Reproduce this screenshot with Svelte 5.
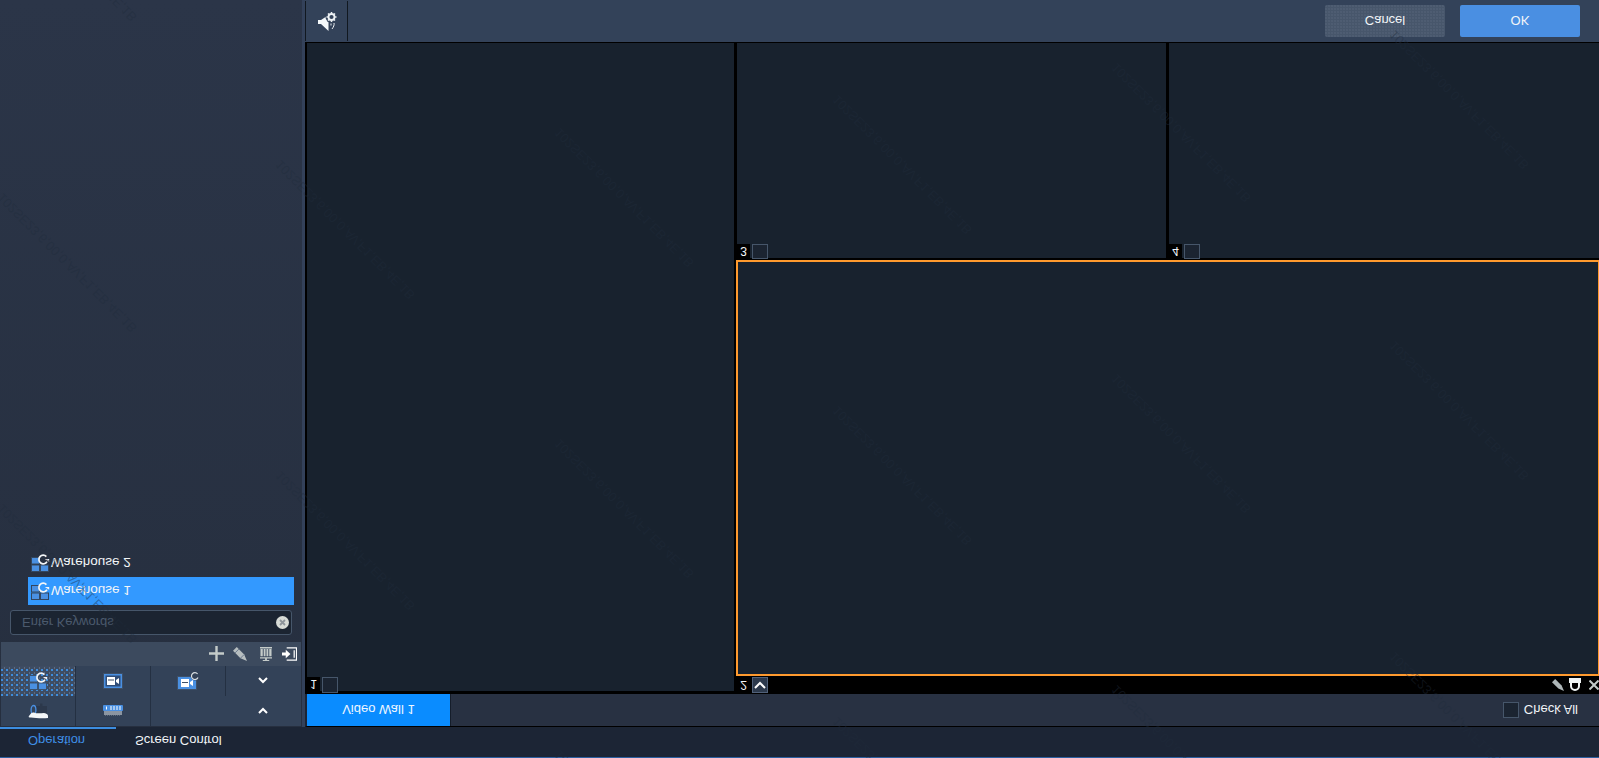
<script>
  const marks = [];
  for (let j = -1; j <= 2; j++) {
    for (let i = 0; i <= 5; i++) {
      const x = 278.4 * i;
      const y = 195 - 32.6 * i + 311 * j;
      if (y + 137 > 0 && y < 758) marks.push({ x, bottom: y - 7 });
    }
  }
  const wmText = '102SE23,6,00,0,AV,F1,EB,4E,1B';
</script>

{#snippet warehouse(frame)}
  <svg class="up" width="20" height="18" viewBox="0 0 20 18">
    <rect x="1.5" y="3.5" width="8" height="6.5" fill="#4a90e2" stroke={frame} />
    <rect x="1.5" y="11" width="8" height="6.5" fill="#4a90e2" stroke={frame} />
    <rect x="10.5" y="11" width="8" height="6.5" fill="#4a90e2" stroke={frame} />
    <path d="M16.4 2.6 A4.3 4.3 0 1 0 17 7.6" fill="none" stroke="#f4f6f8" stroke-width="1.7" />
    <path d="M14.8 5 H19.2 V7.8 Z" fill="#f4f6f8" />
  </svg>
{/snippet}

{#snippet cameraScreen()}
  <svg class="up" width="20" height="16" viewBox="0 0 20 16">
    <rect x="0" y="0" width="20" height="16" fill="#3e5068" />
    <rect x="1" y="1" width="18" height="14" fill="#4a90e2" />
    <rect x="2.5" y="2.5" width="15" height="11" fill="#2f4d78" />
    <rect x="4" y="4" width="8" height="8" fill="#fff" />
    <rect x="5" y="6.5" width="6" height="1" fill="#3e5068" />
    <path d="M13 7 L16 5 V11 L13 9 Z" fill="#fff" />
  </svg>
{/snippet}

<div class="app">
  <div class="main">
    <aside class="sidebar">
      <div class="side-fill"></div>
      <ul class="tree">
        <li class="node">{@render warehouse('#33465f')}<span>Warehouse 2</span></li>
        <li class="node selected">{@render warehouse('#33465f')}<span>Warehouse 1</span></li>
      </ul>
      <div class="search">
        <span class="placeholder">Enter Keywords</span>
        <span class="clear">
          <svg class="up" width="13" height="13" viewBox="0 0 13 13">
            <circle cx="6.5" cy="6.5" r="6.5" fill="#d7dbd6" />
            <path d="M4 4 L9 9 M9 4 L4 9" stroke="#8d949a" stroke-width="1.8" />
          </svg>
        </span>
      </div>
      <div class="toolbar">
        <svg class="up" width="15" height="15" viewBox="0 0 15 15"><path d="M7.5 0 V15 M0 7.5 H15" stroke="#c4cbc9" stroke-width="2.4" /></svg>
        <svg class="up" width="14" height="14" viewBox="0 0 15 15"><path d="M0 4 L4 0 L12 8 L15 15 L8 12 Z" fill="#b6bdbf" /><path d="M2 6.5 L6.5 2 M8 12 L12 8" stroke="#66748a" stroke-width="1" /></svg>
        <svg class="up columns" width="12" height="14" viewBox="0 0 13 15"><path d="M0 0 H13 V1.5 H0 Z M0.5 2 H3 V10 H0.5 Z M4 2 H6 V10 H4 Z M7 2 H9 V10 H7 Z M10 2 H12.5 V10 H10 Z M0 11 H13 V12.5 H7.5 V14 H10 V15 H3 V14 H5.5 V12.5 H0 Z" fill="#c4cbc9" /></svg>
        <svg class="up enter" width="15" height="14" viewBox="0 0 16 14"><path d="M5 0.5 H15.5 V13.5 H5 M13 3 V11" fill="none" stroke="#fff" stroke-width="1.3" /><path d="M0 5.5 H4 V2.5 L9 7 L4 11.5 V8.5 H0 Z" fill="#fff" /></svg>
      </div>
      <div class="modes">
        <div class="mode-row">
          <div class="mode active">{@render warehouse('#3a5270')}</div>
          <div class="mode">{@render cameraScreen()}</div>
          <div class="mode">
            <svg class="up" width="22" height="18" viewBox="0 0 22 18">
              <rect x="0" y="4" width="20" height="14" fill="#3e5068" />
              <rect x="1" y="5" width="18" height="12" fill="#4a90e2" />
              <rect x="4" y="7" width="8" height="8" fill="#fff" />
              <rect x="5" y="10" width="6" height="1" fill="#3e5068" />
              <path d="M13 10 L16 8 V14 L13 12 Z" fill="#fff" />
              <circle cx="18" cy="4" r="4.4" fill="#334258" />
              <path d="M20.6 2 A3.4 3.4 0 1 0 21 5.5" fill="none" stroke="#d8dde0" stroke-width="1.2" />
            </svg>
          </div>
          <div class="mode last">
            <svg class="up" width="10" height="7" viewBox="0 0 10 7"><path d="M1 1 L5 5 L9 1" fill="none" stroke="#fff" stroke-width="2" /></svg>
          </div>
        </div>
        <div class="mode-row">
          <div class="mode">
            <svg class="up" width="20" height="16" viewBox="0 0 20 16">
              <path d="M8 3 H12 V0.5 H14.5 V3 H19 V11 H8 Z" fill="#2c384b" />
              <ellipse cx="5.5" cy="7" rx="2.4" ry="4.5" fill="#334258" stroke="#4a90e2" stroke-width="1.3" />
              <path d="M1 13 C3 10 4 9 6 9.5 C9 11 13 10 16 10 C19 10.5 20 11.5 20 13 V15 C14 15.5 7 15 3 14.5 C1 14.5 0 14 1 13 Z" fill="#f4f7f9" />
            </svg>
          </div>
          <div class="mode">
            <svg class="up" width="20" height="11" viewBox="0 0 20 11">
              <rect x="0" y="0" width="20" height="6" rx="1" fill="#4a90e2" />
              <path d="M3 3 H4" stroke="#fff" stroke-width="3" />
              <path d="M7 2 H18 M7 4 H18" stroke="#fff" stroke-dasharray="2 1" />
              <rect x="1" y="6" width="18" height="4" fill="#8b95a1" />
              <path d="M2 10.5 H18" stroke="#5d6a7b" stroke-dasharray="1 1" />
            </svg>
          </div>
          <div class="mode open"></div>
          <div class="mode last">
            <svg class="up" width="10" height="7" viewBox="0 0 10 7"><path d="M1 6 L5 2 L9 6" fill="none" stroke="#fff" stroke-width="2" /></svg>
          </div>
        </div>
      </div>
    </aside>
    <div class="edge"></div>
    <section class="content">
      <header class="topbar">
        <div class="audio">
          <svg class="up" width="20" height="22" viewBox="0 0 20 22">
            <path d="M1 10 H4 L11.5 5 V21 L4 14 H1 Z" fill="#f4f8fa" />
            <circle cx="14.5" cy="7" r="6" fill="#334259" />
            <circle cx="14.5" cy="7" r="3" fill="#334259" stroke="#eef2f5" stroke-width="1.8" />
            <path d="M14.5 2 V3.4 M14.5 10.6 V12 M9.5 7 H10.9 M18.1 7 H19.5 M11 3.5 L12 4.5 M17 9.5 L18 10.5 M18 3.5 L17 4.5 M12 9.5 L11 10.5" stroke="#eef2f5" stroke-width="1.5" />
            <path d="M14 13.5 V15.5 M17 13 C17.5 15 16.5 17 15 19" fill="none" stroke="#eef2f5" />
          </svg>
        </div>
        <div class="actions">
          <button class="btn cancel">Cancel</button>
          <button class="btn ok">OK</button>
        </div>
      </header>
      <div class="wall">
        <div class="cell first">
          <span class="num">1</span><span class="check pull"></span>
        </div>
        <div class="wall-right">
          <div class="upper">
            <div class="cell">
              <span class="num">3</span><span class="check pull-small"></span>
            </div>
            <div class="cell">
              <span class="num">4</span><span class="check pull-small"></span>
            </div>
          </div>
          <div class="focus"></div>
          <div class="focus-strip">
            <span class="num">2</span>
            <span class="check chev">
              <svg class="up" width="12" height="8" viewBox="0 0 12 8"><path d="M1 7 L6 2 L11 7" fill="none" stroke="#fff" stroke-width="2" /></svg>
            </span>
            <span class="strip-tools">
              <svg class="up" width="12" height="12" viewBox="0 0 15 15"><path d="M0 4 L4 0 L12 8 L15 15 L8 12 Z" fill="#aeb6b8" /></svg>
              <svg class="up" width="12" height="13" viewBox="0 0 12 13"><path d="M0 0 H12 V5 H0 Z" fill="#f0f4f4" /><path d="M2 5 V8 A4 4 0 0 0 10 8 V5" fill="none" stroke="#f0f4f4" stroke-width="2" /></svg>
              <svg class="up" width="10" height="10" viewBox="0 0 10 10"><path d="M0.5 0.5 L9.5 9.5 M9.5 0.5 L0.5 9.5" stroke="#c4cbc9" stroke-width="2" /></svg>
            </span>
          </div>
        </div>
      </div>
      <div class="wall-tabs">
        <div class="wall-tab">Video Wall 1</div>
        <label class="check-all"><span class="check"></span><span>Check All</span></label>
      </div>
    </section>
  </div>
  <nav class="tabs">
    <div class="tab on">Operation</div>
    <div class="tab">Screen Control</div>
  </nav>
  <div class="marks" aria-hidden="true">
    {#each marks as m}
      <span class="mark" style="left:{m.x}px;bottom:{m.bottom}px">{wmText}</span>
    {/each}
  </div>
</div>

<style>
  :global(body) { margin: 0; background: #1c2535; overflow: hidden; }
  .app {
    position: relative;
    width: 1599px;
    height: 758px;
    overflow: hidden;
    display: flex;
    flex-direction: column-reverse;
    transform: scaleY(-1);
    font-family: "Liberation Sans", Arial, sans-serif;
    font-size: 13px;
    color: #f2f5f8;
    background: #1c2535;
  }
  .up { transform: scaleY(-1); display: block; flex: none; }
  .main { display: flex; height: 727px; flex: none; }
  .sidebar {
    width: 302px;
    flex: none;
    display: flex;
    flex-direction: column-reverse;
    background: linear-gradient(to top, #2b3548, #262f3f);
  }
  .side-fill { flex: 1; }
  .tree { list-style: none; margin: 0 0 0 28px; padding: 0; width: 266px; display: flex; flex-direction: column-reverse; }
  .node { height: 28px; display: flex; align-items: center; gap: 1px; padding-left: 2px; font-size: 13.5px; }
  .selected { background: #3399ff; }
  .search {
    height: 25px;
    width: 282px;
    margin: 7px 0 5px 10px;
    box-sizing: border-box;
    border: 1px solid #46566a;
    border-radius: 3px;
    background: #1b2431;
    display: flex;
    align-items: center;
    justify-content: space-between;
    padding: 0 2px 0 11px;
    color: #4b5a6d;
  }
  .toolbar {
    height: 24px;
    width: 300px;
    margin-left: 1px;
    flex: none;
    background: #3c4a5e;
    display: flex;
    align-items: center;
    justify-content: flex-end;
    gap: 9px;
    padding-right: 4px;
    box-sizing: border-box;
  }
  .columns { margin-left: 4px; }
  .enter { margin-left: 1px; }
  .modes {
    display: flex;
    flex-direction: column-reverse;
    flex: none;
    width: 300px;
    margin: 1px 0 0 1px;
    background: #334258;
  }
  .mode-row {
    display: grid;
    grid-template-columns: 75px 75px 75px 75px;
    height: 30px;
  }
  .mode { display: flex; align-items: center; justify-content: center; border-right: 1px solid #243042; }
  .mode.open { border-right: none; }
  .mode.last { border-right: none; justify-content: flex-start; padding-left: 32px; }
  .mode.active {
    background-color: #3e4c62;
    background-image:
      radial-gradient(circle at 1px 1px, #3f8fe0 0.7px, transparent 0.9px),
      radial-gradient(circle at 3.5px 3px, #5a6a80 0.7px, transparent 0.9px);
    background-size: 5px 5px;
  }
  .edge { width: 3px; flex: none; background: #33415a; }
  .content { flex: 1; min-width: 0; display: flex; flex-direction: column-reverse; }
  .topbar {
    height: 42px;
    flex: none;
    display: flex;
    align-items: center;
    justify-content: space-between;
    background: #334259;
    box-sizing: border-box;
  }
  .audio {
    width: 41px;
    height: 40px;
    border-left: 1px solid #111820;
    border-right: 1px solid #111820;
    display: flex;
    align-items: center;
    justify-content: center;
  }
  .actions { display: flex; gap: 15px; padding-right: 19px; }
  .btn {
    width: 120px;
    height: 32px;
    border: none;
    border-radius: 2px;
    font: inherit;
    color: #f2f5f8;
    padding: 0;
  }
  .cancel {
    background-color: #47566b;
    background-image: radial-gradient(circle at 1px 1px, #4e5d72 0.7px, transparent 0.9px);
    background-size: 3px 3px;
  }
  .ok { background: #4a8fe2; }
  .wall {
    flex: none;
    height: 652px;
    padding-bottom: 1px;
    box-sizing: border-box;
    display: flex;
    gap: 3px;
    background: #000;
    border-left: 2px solid #000;
  }
  .cell { background: #18222e; display: flex; align-items: flex-start; }
  .first { width: 427px; flex: none; height: 648px; align-self: flex-end; }
  .num { width: 13px; height: 14px; background: #000; color: #f2f5f8; font-size: 12px; line-height: 14px; text-align: center; flex: none; }
  .check {
    width: 16px;
    height: 16px;
    box-sizing: border-box;
    border: 1px solid #46566a;
    background: #1b2431;
    margin-left: 2px;
    flex: none;
    display: flex;
    align-items: center;
    justify-content: center;
  }
  .pull { margin-top: -2px; }
  .pull-small { margin-top: -1px; height: 15px; }
  .wall-right { flex: 1; min-width: 0; display: flex; flex-direction: column-reverse; }
  .upper { height: 215px; display: flex; gap: 3px; flex: none; }
  .upper .cell:first-child { width: 429px; flex: none; }
  .upper .cell:last-child { flex: 1; }
  .focus { height: 416px; flex: none; margin: 0 -1px 2px -1px; box-sizing: border-box; border: 2px solid #ff9a2e; background: #18222e; }
  .focus-strip { height: 18px; flex: none; display: flex; align-items: center; background: #000; }
  .focus-strip .num { height: 16px; line-height: 16px; }
  .chev { background: #2c394c; border-color: #51617a; }
  .strip-tools { margin-left: auto; display: flex; gap: 5px; align-items: center; }
  .strip-tools svg:last-child { margin-left: 3px; }
  .wall-tabs {
    flex: none;
    height: 33px;
    box-sizing: border-box;
    display: flex;
    align-items: center;
    justify-content: space-between;
    background: #283142;
    border-top: 1px solid #000;
    border-left: 2px solid #1c2535;
  }
  .wall-tab { width: 143px; align-self: stretch; display: flex; align-items: center; justify-content: center; background: #0a8cff; color: #eef6ff; border-right: 1px solid #151d2a; }
  .check-all { display: flex; align-items: center; gap: 5px; padding-right: 21px; }
  .tabs { height: 31px; flex: none; display: flex; box-sizing: border-box; background: #1c2535; border-top: 1px solid #2c5fa0; }
  .tab { display: flex; align-items: center; padding: 2px 0 0 19px; }
  .tab.on { width: 116px; box-sizing: border-box; padding-left: 28px; color: #3f8fe6; box-shadow: inset 0 -2px 0 #3c8de0; }
  .marks { position: absolute; inset: 0; pointer-events: none; }
  .mark {
    position: absolute;
    transform-origin: left center;
    transform: rotate(-45deg);
    white-space: nowrap;
    font-size: 13px;
    line-height: 14px;
    color: rgba(32, 44, 60, 0.42);
  }
</style>
